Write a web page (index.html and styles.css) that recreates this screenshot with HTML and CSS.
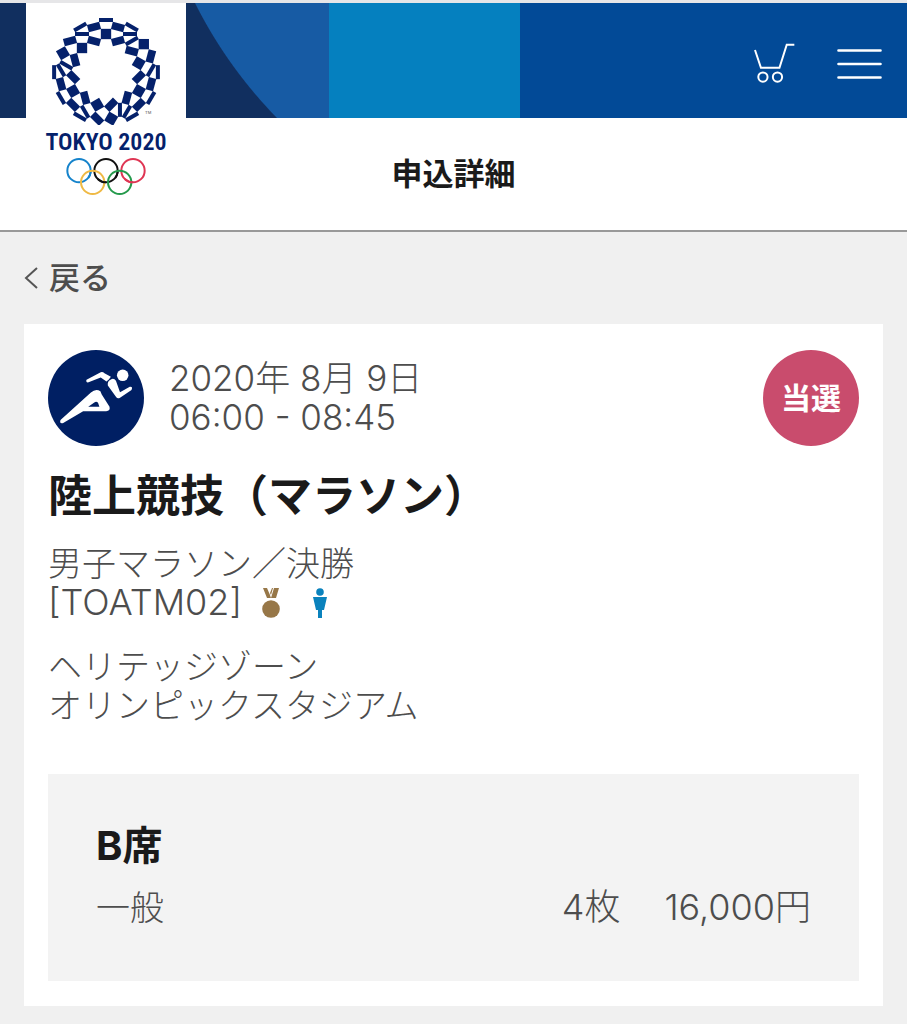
FILE: index.html
```html
<!DOCTYPE html>
<html lang="ja">
<head>
    <meta charset="UTF-8">
    <meta name="viewport" content="width=device-width, initial-scale=1.0">
    <title>申込詳細</title>
    <link rel="stylesheet" href="styles.css">
</head>
<body>
    <header class="site-header">
        <a href="#" class="logo">
            <svg class="logo-emblem" viewBox="-162 -162 324 321" aria-hidden="true">
                <defs>
                    <rect id="narrow" x="-21" y="-6" width="42" height="12"/>
                    <rect id="wide" x="-19" y="-11.5" width="38" height="23"/>
                    <rect id="square" x="-15.5" y="-15.5" width="31" height="31"/>
                    <!-- one third of the ring -->
                    <g id="third">
                        <use href="#narrow" transform="translate(0 -156)"/>
                        <use href="#wide" transform="translate(-36 -135) rotate(-15)"/>
                        <use href="#wide" transform="translate(36 -135) rotate(15)"/>
                        <use href="#narrow" transform="translate(-77.4 -135) rotate(-30)"/>
                        <use href="#narrow" transform="translate(77.4 -135) rotate(30)"/>
                        <use href="#square" transform="translate(0 -114)"/>
                        <use href="#narrow" transform="translate(-72 -114)"/>
                        <use href="#narrow" transform="translate(72 -114)"/>
                        <use href="#wide" transform="translate(-36 -93) rotate(15)"/>
                        <use href="#wide" transform="translate(36 -93) rotate(-15)"/>
                        <use href="#wide" transform="translate(-108 -93) rotate(-15)"/>
                        <use href="#square" transform="translate(-72 -72)"/>
                        <use href="#narrow" transform="translate(77.4 -93) rotate(-30)"/>
                        <use href="#square" transform="translate(113.4 -83.6)"/>
                        <use href="#wide" transform="translate(77.4 -62.7) rotate(15)"/>
                    </g>
                </defs>
                <g fill="#05216b">
                    <use href="#third"/>
                    <use href="#third" transform="rotate(120)"/>
                    <use href="#third" transform="rotate(240)"/>
                </g>
                <text class="logo-tm" x="117" y="127">TM</text>
            </svg>
            <span class="logo-text">TOKYO 2020</span>
            <svg class="logo-rings" viewBox="139 474 240 111" fill="none" stroke-width="6" aria-hidden="true">
                <circle cx="178" cy="512" r="35" stroke="#1583cb"/>
                <circle cx="259" cy="512" r="35" stroke="#111"/>
                <circle cx="340" cy="512" r="35" stroke="#df3553"/>
                <circle cx="219" cy="547" r="35" stroke="#efb944"/>
                <circle cx="300" cy="547" r="35" stroke="#259a4c"/>
                <path d="M213 516a35 35 0 0 1-7 17" stroke="#1583cb"/>
                <path d="M294 516a35 35 0 0 1-7 17" stroke="#111"/>
                <path d="M259 547a35 35 0 0 1-25-10" stroke="#111"/>
                <path d="M340 547a35 35 0 0 1-25-10" stroke="#df3553"/>
            </svg>
        </a>
        <nav class="header-nav">
            <button type="button" class="icon-btn" aria-label="カート">
                <svg width="41" height="41" viewBox="72 72 124 122" fill="none" stroke="#fff" stroke-width="6" aria-hidden="true">
                    <path d="M75 92l18 54h56l22-70h23"/>
                    <circle cx="99" cy="174" r="14"/>
                    <circle cx="143" cy="174" r="14"/>
                </svg>
            </button>
            <button type="button" class="icon-btn" aria-label="メニュー">
                <svg width="45" height="30" viewBox="0 0 45 30" stroke="#fff" stroke-width="2.6" stroke-linecap="round" aria-hidden="true">
                    <path d="M1.5 1.5h42M1.5 15h42M1.5 28.5h42"/>
                </svg>
            </button>
        </nav>
    </header>

    <h1 class="page-title">申込詳細</h1>

    <main>
        <a href="#" class="back-link">
            <svg width="14" height="22" viewBox="0 0 14 22" fill="none" stroke="#555" stroke-width="2" aria-hidden="true">
                <path d="M13 1L2 11l11 10"/>
            </svg>
            戻る
        </a>

        <article class="card">
            <div class="card-head">
                <svg class="sport-icon" viewBox="28 27 284 284" aria-hidden="true">
                    <circle cx="170" cy="169" r="142" fill="#001f63"/>
                    <g fill="#fff">
                        <circle cx="249" cy="102" r="17"/>
                        <path d="M142 115L184 93Q190 91 195 96L214 106L208 114L201 120L184 108L146 123Q139 122 142 115Z"/>
                        <path d="M205 132Q203 119 214 114Q223 109 229 118L241 152L270 136Q280 135 275 145L240 169Q233 172 229 165Z"/>
                        <path fill-rule="evenodd" d="M65 234L155 153Q169 140 183 149L187 159L210 195Q213 208 200 208L132 208L73 243Q61 246 65 234ZM147 195L180 195L176 183Q171 177 165 182Z"/>
                    </g>
                </svg>
                <p class="event-date">2020年 8月 9日<br>06:00 - 08:45</p>
                <span class="badge">当選</span>
            </div>

            <h2 class="event-title">陸上競技（マラソン）</h2>

            <div class="event-info">
                <p>男子マラソン／決勝</p>
                <p class="event-code">
                    [TOATM02]
                    <svg class="medal-icon" width="18" height="30" viewBox="0 0 18 30" fill="#977748" role="img" aria-label="メダル種目">
                        <path d="M1 0h4l3 7 1 3H5zM8 5l2-5h1L9 7zM12 0h5l-3 10H9z"/>
                        <circle cx="9" cy="21" r="8.8"/>
                    </svg>
                    <svg width="16" height="30" viewBox="0 0 16 30" fill="#0a82bd" role="img" aria-label="男子">
                        <circle cx="8" cy="4" r="3.8"/>
                        <path d="M1 9h14l-3 13h-2v8H6v-8H4z"/>
                    </svg>
                </p>
            </div>

            <p class="event-venue">ヘリテッジゾーン<br>オリンピックスタジアム</p>

            <section class="ticket">
                <h3>B席</h3>
                <div class="ticket-row">
                    <span class="ticket-type">一般</span>
                    <span class="ticket-num">4枚</span>
                    <span class="ticket-num">16,000円</span>
                </div>
            </section>
        </article>
    </main>
</body>
</html>
```
FILE: styles.css
```css
:root {
    --navy: #112f5f;
    --logo-navy: #05216b;
    --text-color: #4d4d4d;
    --heading-color: #1a1a1a;
    --page-bg: #f0f0f0;
    --badge-color: #c94c6d;
}

* {
    margin: 0;
    padding: 0;
    box-sizing: border-box;
}

body {
    font-family: Inter, "Noto Sans CJK JP", sans-serif;
    font-size: 34px;
    font-weight: 300;
    line-height: 39px;
    color: var(--text-color);
    background-color: var(--page-bg);
}

a {
    color: inherit;
    text-decoration: none;
}

.site-header {
    position: relative;
    display: flex;
    justify-content: space-between;
    align-items: flex-start;
    height: 118px;
    padding: 0 25px 0 26px;
    border-top: 3px solid #e6e6e8;
    background:
        radial-gradient(circle at 604px -205px, transparent 457px, var(--navy) 458px) 0 0 / 329px 100% no-repeat,
        linear-gradient(to right, #175ba4 329px, #0580bf 329px 520px, #024a97 520px);
    background-origin: padding-box;
}

/* the logo hangs below the header bar */
.logo {
    display: flex;
    flex-direction: column;
    align-items: center;
    width: 160px;
    padding-top: 15px;
    background-color: #fff;
}

.logo-emblem {
    width: 108px;
    height: 107px;
}

.logo-tm {
    font-family: "Liberation Sans", sans-serif;
    font-size: 13px;
    fill: #555;
}

.logo-text {
    margin-top: 5px;
    font-family: "Liberation Sans Narrow", "Roboto Condensed", Roboto, sans-serif;
    font-size: 24px;
    font-weight: 600;
    line-height: 24px;
    white-space: nowrap;
    color: var(--logo-navy);
}

.logo-rings {
    width: 80px;
    height: 37px;
    margin-top: 4px;
}

.header-nav {
    display: flex;
    align-items: center;
    gap: 42px;
    margin-top: 40px;
}

.icon-btn {
    display: flex;
    border: none;
    background: none;
    cursor: pointer;
}

.page-title {
    padding: 32px 24px;
    border-bottom: 2px solid #999;
    background-color: #fff;
    font-size: 31px;
    font-weight: 700;
    line-height: 48px;
    text-align: center;
    color: var(--heading-color);
}

main {
    padding: 0 24px 18px;
}

.back-link {
    display: inline-flex;
    align-items: center;
    gap: 11px;
    padding: 24px 0;
    font-size: 31px;
    font-weight: 500;
    line-height: 44px;
}

.card {
    padding: 26px 24px 25px;
    background-color: #fff;
}

.card-head {
    display: flex;
    align-items: center;
    gap: 25px;
}

.sport-icon {
    flex: none;
    width: 96px;
    height: 96px;
}

.event-date {
    font-size: 35px;
}

.event-code,
.ticket-num {
    font-size: 36px;
}

.badge {
    display: flex;
    flex: none;
    align-items: center;
    justify-content: center;
    width: 96px;
    height: 96px;
    margin-left: auto;
    border-radius: 50%;
    background-color: var(--badge-color);
    font-size: 30px;
    font-weight: 700;
    color: #fff;
}

.event-title {
    margin-top: 20px;
    font-size: 44px;
    font-weight: 700;
    line-height: 60px;
    color: var(--heading-color);
}

.event-info {
    margin-top: 18px;
}

.event-code {
    display: flex;
    align-items: center;
    gap: 32px;
}

.medal-icon {
    margin-left: -12px;
}

.event-venue {
    margin-top: 25px;
}

.ticket {
    margin-top: 49px;
    padding: 48px 48px 54px;
    background-color: #f3f3f3;
}

.ticket h3 {
    font-size: 40px;
    font-weight: 700;
    line-height: 48px;
    color: var(--heading-color);
}

.ticket-row {
    display: flex;
    gap: 44px;
    margin-top: 18px;
}

.ticket-type {
    flex: 1;
}
```
